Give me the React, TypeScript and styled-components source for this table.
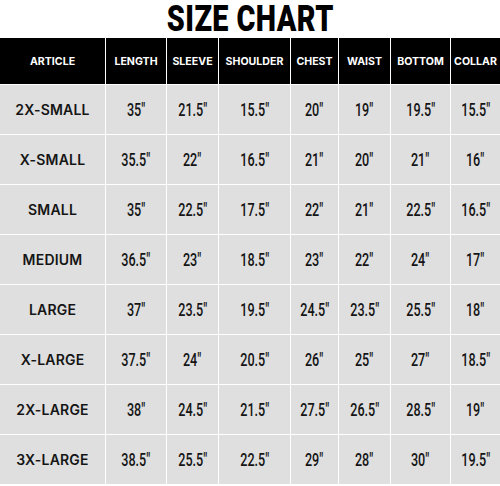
import React from 'react';
import styled, { createGlobalStyle } from 'styled-components';

const GlobalStyle = createGlobalStyle`
  html, body {
    margin: 0;
    padding: 0;
    background: #ffffff;
  }
`;

const Page = styled.div`
  width: 500px;
  height: 486px;
  overflow: hidden;
  background: #fff;
`;

const TitleBar = styled.div`
  height: 38px;
  display: flex;
  align-items: center;
  justify-content: center;
`;

const Title = styled.h1`
  margin: 0;
  font-family: Roboto, 'Liberation Sans', sans-serif;
  font-weight: 900;
  font-size: 36px;
  line-height: 38px;
  color: #000;
  letter-spacing: 0.5px;
  transform: scaleX(0.8);
`;

const Table = styled.div`
  display: grid;
  grid-template-columns: 105px 60px 51px 71px 47px 51px 59px 49px;
  grid-template-rows: 46px repeat(8, 49px);
  gap: 1px;
  background: #fff;
`;

const HeadCell = styled.div`
  background: #000;
  color: #fff;
  display: flex;
  align-items: center;
  justify-content: center;
  font-family: Inter, 'Open Sans', sans-serif;
  font-weight: 700;
  font-size: 10.6px;
  white-space: nowrap;
`;

const Cell = styled.div`
  background: #dfdfdf;
  display: flex;
  align-items: center;
  justify-content: center;
  color: #151515;
`;

const SizeName = styled(Cell)`
  font-family: Inter, 'Open Sans', sans-serif;
  font-weight: 600;
  font-size: 14px;
  letter-spacing: 0.2px;
  white-space: nowrap;
`;

const Num = styled.span`
  display: inline-block;
  font-family: Roboto, 'Liberation Sans', sans-serif;
  font-weight: 500;
  font-size: 18px;
  transform: scaleX(0.7);
  white-space: nowrap;
`;

const headers = ['ARTICLE', 'LENGTH', 'SLEEVE', 'SHOULDER', 'CHEST', 'WAIST', 'BOTTOM', 'COLLAR'];

const rows: [string, ...string[]][] = [
  ['2X-SMALL', '35', '21.5', '15.5', '20', '19', '19.5', '15.5'],
  ['X-SMALL', '35.5', '22', '16.5', '21', '20', '21', '16'],
  ['SMALL', '35', '22.5', '17.5', '22', '21', '22.5', '16.5'],
  ['MEDIUM', '36.5', '23', '18.5', '23', '22', '24', '17'],
  ['LARGE', '37', '23.5', '19.5', '24.5', '23.5', '25.5', '18'],
  ['X-LARGE', '37.5', '24', '20.5', '26', '25', '27', '18.5'],
  ['2X-LARGE', '38', '24.5', '21.5', '27.5', '26.5', '28.5', '19'],
  ['3X-LARGE', '38.5', '25.5', '22.5', '29', '28', '30', '19.5'],
];

export default function App() {
  return (
    <Page>
      <GlobalStyle />
      <TitleBar>
        <Title>SIZE CHART</Title>
      </TitleBar>
      <Table>
        {headers.map((h) => (
          <HeadCell key={h}>{h}</HeadCell>
        ))}
        {rows.map(([name, ...vals]) => (
          <React.Fragment key={name}>
            <SizeName>{name}</SizeName>
            {vals.map((v, i) => (
              <Cell key={i}>
                <Num>{v}″</Num>
              </Cell>
            ))}
          </React.Fragment>
        ))}
      </Table>
    </Page>
  );
}
